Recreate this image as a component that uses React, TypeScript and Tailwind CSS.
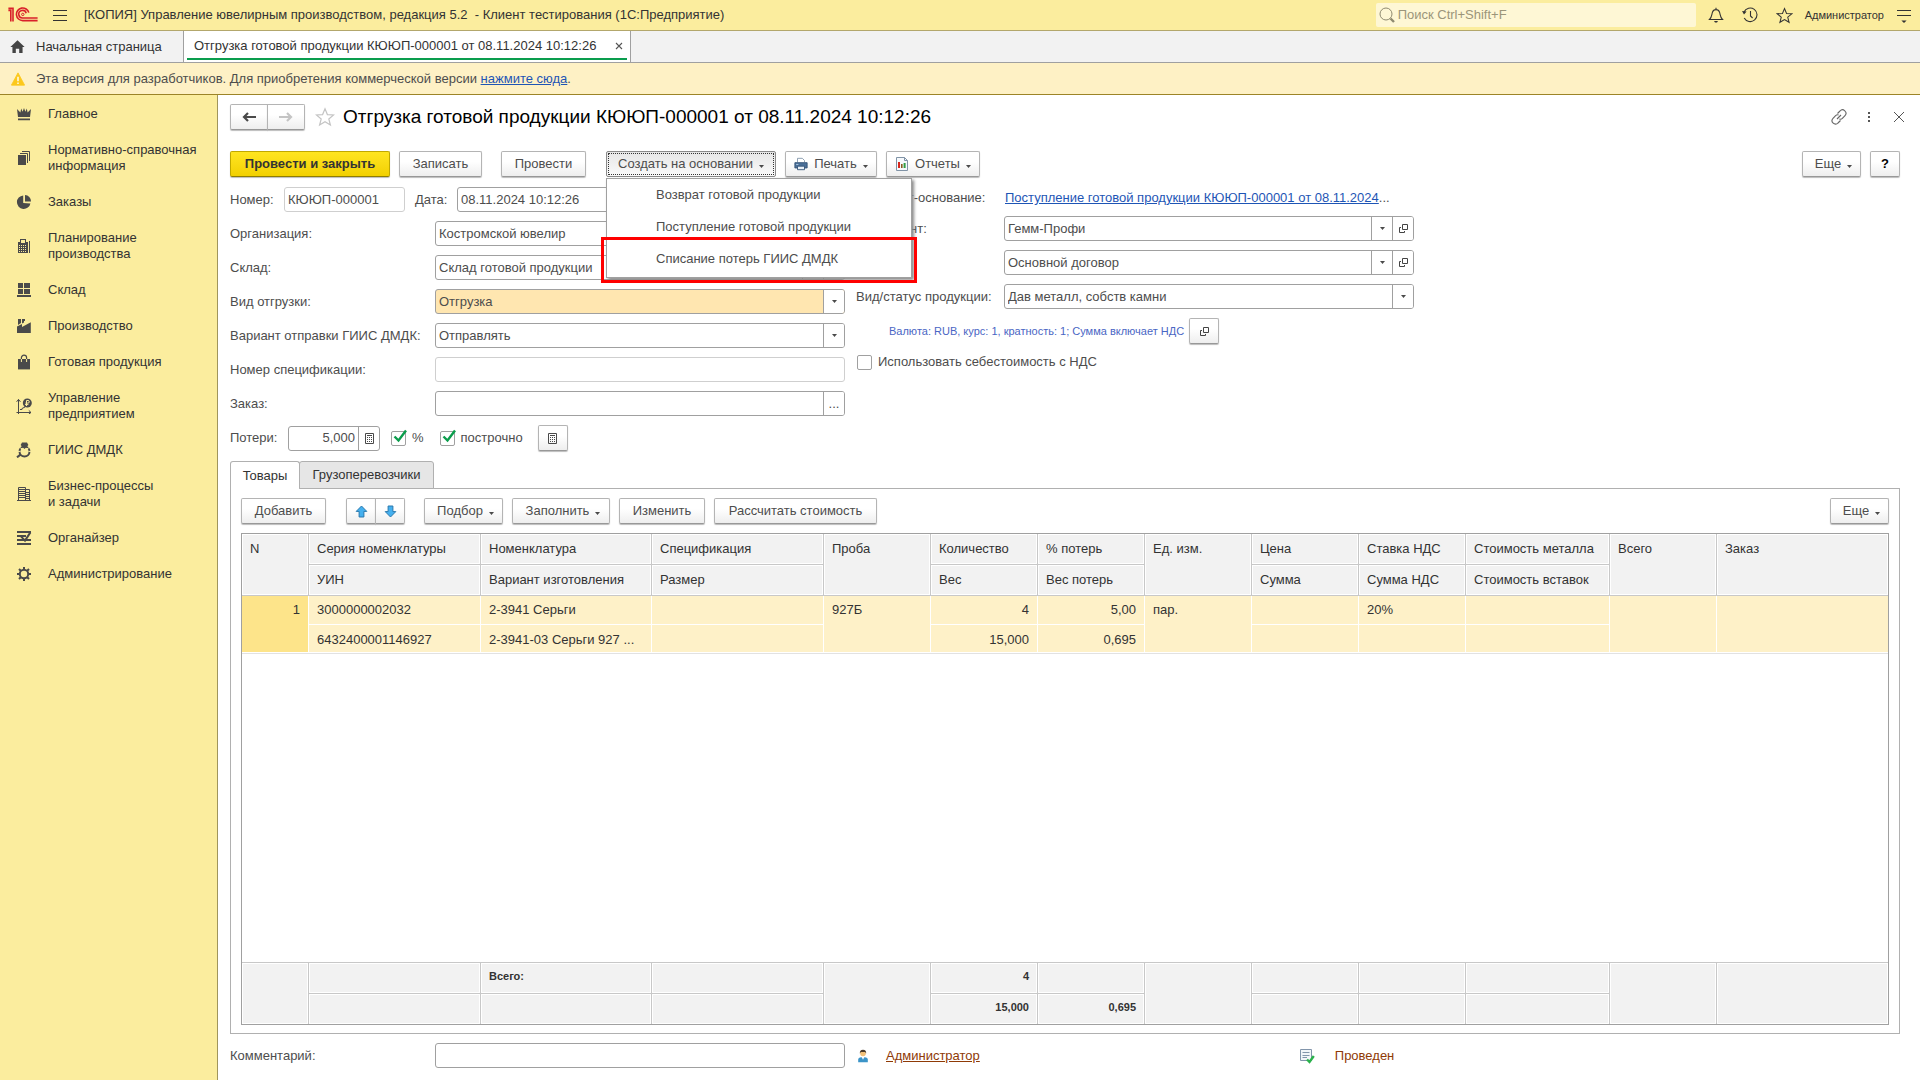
import { useId, type ReactNode } from "react";

/* ---------- icons ---------- */

function Svg({ children, size = 16, box = 16, className = "" }: { children: ReactNode; size?: number; box?: number; className?: string }) {
  return (
    <svg width={size} height={size} viewBox={`0 0 ${box} ${box}`} fill="none" className={`shrink-0 ${className}`} aria-hidden="true">
      {children}
    </svg>
  );
}

const Logo = () => (
  <svg width="30" height="16" viewBox="0 0 30 16" fill="none" stroke="#d9202a" strokeWidth="1.6" className="shrink-0" aria-label="1С">
    <path d="M.4 3.4H2.8V14.6M.4 1.4H5V14.6" />
    <path d="M20.8 5.6A6.3 6.3 0 1 0 14.8 13.6H29.6" />
    <path d="M18.2 6.2A3.8 3.8 0 1 0 14.8 11H29.6" />
    <path d="M13.6 7.4a1.2 1.2 0 1 0 2.4 0a1.2 1.2 0 1 0-2.4 0" strokeWidth="1" />
  </svg>
);

const I = "#4a4a4a";
const PAPER = "#fbed9e";

const sideIcons: Record<string, ReactNode> = {
  crown: <path fill={I} d="M1 3 4.4 6.6 5.2 2.4 6.6 5.8 8 2 9.4 5.8 10.8 2.4 11.6 6.6 15 3 14 11H2ZM2 12.4H14V14.2H2Z" />,
  docs: (
    <>
      <path fill={I} d="M2 5H10V15H2Z" />
      <path stroke={I} d="M4 3.5H11.5V13M6 1.5H13.5V11" />
    </>
  ),
  pie: (
    <>
      <path fill={I} d="M7.2 1.4A6.8 6.8 0 1 0 14.4 9.4L7.2 9Z" />
      <path fill={I} d="M9 1A6.2 6.2 0 0 1 15 7.4H9Z" />
    </>
  ),
  calc: (
    <>
      <path
        fill={I}
        fillRule="evenodd"
        d="M4 1H10V4H12V15H2V4H4ZM5 2V5H9V2ZM3 7V8H4V7ZM5 7V8H6V7ZM7 7V8H8V7ZM9 7V8H10V7ZM3 9V10H4V9ZM5 9V10H6V9ZM7 9V10H8V9ZM9 9V10H10V9ZM3 11V12H4V11ZM5 11V12H6V11ZM7 11V12H8V11ZM9 11V12H10V11ZM3 13V14H4V13ZM5 13V14H6V13ZM7 13V14H8V13ZM9 13V14H10V13Z"
      />
      <path fill={I} d="M13 3H14V15H13Z" />
    </>
  ),
  store: <path fill={I} d="M2 1H7V6H2ZM8 1H14V6H8ZM2 7H7V12H2ZM8 7H14V12H8ZM1 13H15V15H1Z" />,
  factory: (
    <>
      <path fill={I} d="M1 15V8.6L6 6V9L14.8 4.2V15Z" />
      <path fill={I} d="M2 1H5V5L2 7ZM6 1H9V3H8V4.4L6 5.4Z" />
    </>
  ),
  bag: (
    <>
      <path fill={I} d="M2 5H14V15.4H2Z" />
      <path stroke={I} strokeWidth="1.2" d="M5.4 6V3.8a2.6 2.6 0 0 1 5.2 0V6" />
      <path stroke={PAPER} strokeWidth="1" d="M5.4 8V5M10.6 8V5" />
    </>
  ),
  chart: (
    <>
      <path stroke={I} d="M2.5 1.5V16M.5 14.5H15M.6 3.8 2.5 1.4 4.4 3.8M12.8 12.4 15 14.5 12.8 16M4 11.5H6V10.5L9 9" />
      <circle cx="11.3" cy="5" r="4.5" fill={I} />
      <path stroke={PAPER} strokeWidth="1" d="M10.5 8V2.5H12a1.3 1.3 0 0 1 0 2.6H9.4M9 6.6H12.4" />
    </>
  ),
  ring: (
    <>
      <circle cx="8.5" cy="9.4" r="5" stroke={I} strokeWidth="2" />
      <path stroke={PAPER} strokeWidth="1" d="M3.4 5.2 8.5 8.4 13.6 5.2" />
      <path fill={I} d="M6 .6H11L12.4 3 8.5 7 4.6 3Z" />
      <path stroke={I} strokeWidth="2" d="M4.8 12.4 1 15.4" />
      <path stroke={PAPER} strokeWidth="1" d="M1.6 9.4H4.6M12.4 9.4H15.4" />
    </>
  ),
  building: (
    <>
      <path stroke={I} d="M2.5 15V1.5H9.5V15M9.5 3.5H13.5V15M1 14.5H15" />
      <path stroke={I} d="M3 3.5H9M3 5.5H9M3 7.5H9M3 9.5H9M3 11.5H9M10 6.5H13M10 8.5H13M10 10.5H13M10 12.5H13" />
    </>
  ),
  organizer: (
    <>
      <path stroke={I} strokeWidth="2" d="M1 2H15M1 6H10M1 10H15M1 14H15" />
      <path stroke={I} strokeWidth="2" d="M5 6.4 9 10.6 14.4 2.4" />
    </>
  ),
  gear: (
    <>
      <circle cx="8" cy="8" r="4.2" stroke={I} strokeWidth="2" />
      <path stroke={I} strokeWidth="2" d="M8 1V4M8 12V15M1 8H4M12 8H15M3 3 5 5M11 11 13 13M13 3 11 5M5 11 3 13" />
    </>
  ),
};

const Caret = ({ className = "" }: { className?: string }) => (
  <svg width="5" height="3" viewBox="0 0 5 3" className={`shrink-0 ${className}`} aria-hidden="true">
    <path d="M0 0H5L2.5 3Z" fill="#4a4a4a" />
  </svg>
);

const OpenIcon = () => (
  <Svg size={9} box={9}>
    <path stroke="#444" d="M3.5 .5H8.5V5.5H3.5ZM2 3.5H.5V8.5H5.5V7" />
  </Svg>
);

const CalcIcon = () => (
  <Svg size={11} box={11}>
    <path stroke="#4a4a4a" d="M1.5 .5H9.5V10.5H1.5Z" />
    <path stroke="#4a4a4a" d="M3 2.5H8" />
    <path stroke="#4a4a4a" strokeDasharray="1 1" d="M3 4.5H8M3 6.5H8M3 8.5H8" />
  </Svg>
);

const BlueArrow = ({ down = false }: { down?: boolean }) => (
  <Svg size={13} box={13} className={down ? "rotate-180" : ""}>
    <path d="M6.5 1 11.8 6.4H8.9V12H4.1V6.4H1.2Z" fill="#45b0ef" stroke="#2a79ad" />
  </Svg>
);

const Star = ({ size, color }: { size: number; color: string }) => (
  <Svg size={size} box={20}>
    <path d="M10 1.8 12.4 7.6 18.6 8 13.8 12 15.4 18 10 14.7 4.6 18 6.2 12 1.4 8 7.6 7.6Z" stroke={color} strokeWidth="1.2" />
  </Svg>
);

const NavArrow = ({ color, flip = false }: { color: string; flip?: boolean }) => (
  <Svg size={14} box={14} className={flip ? "rotate-180" : ""}>
    <path d="M14 7H2.5M6 3 2 7 6 11" stroke={color} strokeWidth="2.2" />
  </Svg>
);

/* ---------- controls ---------- */

const btn =
  "flex h-[26px] shrink-0 items-center justify-center whitespace-nowrap rounded-[2px] border border-[#b4b4b4] border-b-[#989898] bg-gradient-to-b from-white from-40% to-[#eeeeee] shadow-[0_1px_1px_#bcbcbc]";

function Btn({ children, className = "", label }: { children: ReactNode; className?: string; label?: string }) {
  return (
    <button type="button" aria-label={label} className={`${btn} ${className}`}>
      {children}
    </button>
  );
}

type FieldProps = { label: string; value: string; kind: "select" | "text" | "order"; open?: boolean; tinted?: boolean; readOnly?: boolean; labelClass: string };

function Field({ label, value, kind, open, tinted, readOnly, labelClass }: FieldProps) {
  const id = useId();
  const cell = "flex w-[21px] shrink-0 items-center justify-center border-l border-[#a0a0a0] bg-white";
  return (
    <div className="flex h-[25px] items-center">
      <label htmlFor={id} className={`shrink-0 ${labelClass}`}>
        {label}
      </label>
      <div className={`flex h-full w-[410px] shrink-0 overflow-hidden rounded-[3px] border ${readOnly ? "border-[#cfcfcf]" : "border-[#a0a0a0]"} ${tinted ? "bg-[#ffe6b0]" : "bg-white"}`}>
        {kind === "select" ? (
          <select id={id} className="min-w-0 flex-1 appearance-none bg-transparent px-[3px]">
            <option>{value}</option>
          </select>
        ) : (
          <input id={id} readOnly={readOnly} defaultValue={value} className="min-w-0 flex-1 bg-transparent px-[3px]" />
        )}
        {kind === "select" && (
          <button type="button" aria-label="Выбрать" className={cell}>
            <Caret />
          </button>
        )}
        {kind === "order" && (
          <button type="button" aria-label="Выбрать заказ" className={cell}>
            ...
          </button>
        )}
        {open && (
          <button type="button" aria-label="Открыть" className={cell}>
            <OpenIcon />
          </button>
        )}
      </div>
    </div>
  );
}

function Check({ label, checked }: { label: string; checked?: boolean }) {
  return (
    <label className="flex items-center gap-[6px]">
      <span className="relative h-[15px] w-[15px]">
        <input type="checkbox" defaultChecked={checked} className="peer block h-[15px] w-[15px] appearance-none rounded-[2px] border border-[#a0a0a0] bg-white" />
        <svg width="16" height="16" viewBox="0 0 16 16" fill="none" className="pointer-events-none absolute -top-0.5 left-0.5 hidden peer-checked:block" aria-hidden="true">
          <path d="M1.5 7.5 5.5 11.5 13 1.5" stroke="#0b9d4c" strokeWidth="2.4" />
        </svg>
      </span>
      {label}
    </label>
  );
}

/* ---------- data ---------- */

const sections: [string, string[]][] = [
  ["crown", ["Главное"]],
  ["docs", ["Нормативно-справочная", "информация"]],
  ["pie", ["Заказы"]],
  ["calc", ["Планирование", "производства"]],
  ["store", ["Склад"]],
  ["factory", ["Производство"]],
  ["bag", ["Готовая продукция"]],
  ["chart", ["Управление", "предприятием"]],
  ["ring", ["ГИИС ДМДК"]],
  ["building", ["Бизнес-процессы", "и задачи"]],
  ["organizer", ["Органайзер"]],
  ["gear", ["Администрирование"]],
];

type Column = { head: [string, string?]; data: [string, string?]; foot?: [string, string?]; right?: boolean };

const columns: Column[] = [
  { head: ["N"], data: ["1"], right: true },
  { head: ["Серия номенклатуры", "УИН"], data: ["3000000002032", "6432400001146927"] },
  { head: ["Номенклатура", "Вариант изготовления"], data: ["2-3941 Серьги", "2-3941-03 Серьги 927 ..."], foot: ["Всего:", ""] },
  { head: ["Спецификация", "Размер"], data: ["", ""] },
  { head: ["Проба"], data: ["927Б"] },
  { head: ["Количество", "Вес"], data: ["4", "15,000"], foot: ["4", "15,000"], right: true },
  { head: ["% потерь", "Вес потерь"], data: ["5,00", "0,695"], foot: ["", "0,695"], right: true },
  { head: ["Ед. изм."], data: ["пар."] },
  { head: ["Цена", "Сумма"], data: ["", ""] },
  { head: ["Ставка НДС", "Сумма НДС"], data: ["20%", ""] },
  { head: ["Стоимость металла", "Стоимость вставок"], data: ["", ""] },
  { head: ["Всего"], data: [""] },
  { head: ["Заказ"], data: [""] },
];

const split = (c: Column) => c.head.length === 2;

function Goods() {
  const headCell = "border-b border-r border-[#c8c8c8] bg-[#f2f2f2] px-2 text-left font-normal shadow-[inset_0_0_0_1px_#fff]";
  const dataCell = "truncate border-b border-r border-white px-2";
  const footCell = "border-r border-t border-[#c8c8c8] bg-[#f2f2f2] px-2 pb-1 text-[11px] font-bold shadow-[inset_0_0_0_1px_#fff]";
  return (
    <table className="h-full w-full table-fixed border-separate border-spacing-0 border border-[#a0a0a0] text-[#333]">
      <colgroup>
        <col className="w-[67px]" />
        <col className="w-[172px]" />
        <col className="w-[171px]" />
        <col className="w-[172px]" />
        <col className="w-[107px]" />
        <col className="w-[107px]" />
        <col className="w-[107px]" />
        <col className="w-[107px]" />
        <col className="w-[107px]" />
        <col className="w-[107px]" />
        <col className="w-[144px]" />
        <col className="w-[107px]" />
        <col />
      </colgroup>
      <thead>
        <tr className="h-[31px]">
          {columns.map((c) => (
            <th key={c.head[0]} rowSpan={split(c) ? 1 : 2} className={`${headCell} last:border-r-0 ${split(c) ? "" : "pt-[7px] align-top"}`}>
              {c.head[0]}
            </th>
          ))}
        </tr>
        <tr className="h-[31px]">
          {columns.filter(split).map((c) => (
            <th key={c.head[1]} className={headCell}>
              {c.head[1]}
            </th>
          ))}
        </tr>
      </thead>
      <tbody>
        <tr className="h-[29px]">
          {columns.map((c, i) => (
            <td
              key={c.head[0]}
              rowSpan={split(c) ? 1 : 2}
              className={`${dataCell} last:border-r-0 ${split(c) ? "" : "pt-[6px] align-top"} ${c.right ? "text-right" : ""} ${i === 0 ? "bg-[#fde48a]" : "bg-[#fef1c8]"}`}
            >
              {c.data[0]}
            </td>
          ))}
        </tr>
        <tr className="h-7">
          {columns.filter(split).map((c) => (
            <td key={c.head[0]} className={`${dataCell} bg-[#fef1c8] pt-0.5 ${c.right ? "text-right" : ""}`}>
              {c.data[1]}
            </td>
          ))}
        </tr>
        <tr>
          <td colSpan={13} className="border-t border-[#e2e2e2] bg-white" />
        </tr>
      </tbody>
      <tfoot>
        <tr className="h-[31px]">
          {columns.map((c) => (
            <td key={c.head[0]} rowSpan={split(c) ? 1 : 2} className={`${footCell} last:border-r-0 ${c.right ? "text-right" : ""}`}>
              {c.foot?.[0]}
            </td>
          ))}
        </tr>
        <tr className="h-[31px]">
          {columns.filter(split).map((c) => (
            <td key={c.head[0]} className={`${footCell} ${c.right ? "text-right" : ""}`}>
              {c.foot?.[1]}
            </td>
          ))}
        </tr>
      </tfoot>
    </table>
  );
}

/* ---------- page parts ---------- */

function TopBar() {
  return (
    <header className="flex h-[31px] shrink-0 items-center border-b border-[#b3a76c] bg-[#fbed9e] px-2 text-[#333]">
      <Logo />
      <button type="button" aria-label="Меню" className="ml-[14px]">
        <Svg>
          <path d="M1 3.5H15M1 8.5H15M1 13.5H15" stroke="#333" />
        </Svg>
      </button>
      <div className="ml-4 flex-1 whitespace-pre">[КОПИЯ] Управление ювелирным производством, редакция 5.2  - Клиент тестирования (1С:Предприятие)</div>
      <label className="flex h-6 w-[320px] items-center gap-[3px] rounded-[2px] bg-[#fef7d5] pl-[3px]">
        <Svg>
          <circle cx="7" cy="7" r="6" stroke="#8f8a70" />
          <path d="M11.5 11.5 15 15" stroke="#8f8a70" strokeWidth="2.4" />
        </Svg>
        <input type="search" aria-label="Поиск" placeholder="Поиск Ctrl+Shift+F" className="flex-1 bg-transparent placeholder:text-[#9b957a]" />
      </label>
      <div className="ml-3 flex items-center gap-[18px]">
        <button type="button" aria-label="Уведомления">
          <Svg>
            <path d="M1.5 12.5C4 10 3.6 8 4.4 5.4 5 3.4 6.4 2.6 8 2.6S11 3.4 11.6 5.4C12.4 8 12 10 14.5 12.5ZM8 .8V2.6" stroke="#333" strokeWidth="1.1" />
            <path d="M6 14H10L9 15.6H7Z" fill="#333" />
          </Svg>
        </button>
        <button type="button" aria-label="История">
          <Svg>
            <path d="M2 5A6.8 6.8 0 1 1 2.2 11M8.5 4V9L10.6 11" stroke="#333" strokeWidth="1.1" />
            <path d="M0 4 2 7.4 4.6 4.6Z" fill="#333" />
          </Svg>
        </button>
        <button type="button" aria-label="Избранное">
          <Star size={17} color="#333" />
        </button>
      </div>
      <button type="button" className="ml-3 text-[11px]">
        Администратор
      </button>
      <button type="button" aria-label="Настройки" className="ml-3">
        <Svg>
          <path d="M1 3.5H15M1 8.5H15" stroke="#333" />
          <path d="M5.4 13.4H10.6L8 16Z" fill="#333" />
        </Svg>
      </button>
    </header>
  );
}

function Tabs() {
  return (
    <nav className="flex h-8 shrink-0 border-b border-[#a0a0a0] bg-[#f2f2f2] text-[#333]">
      <a href="#home" className="flex w-[184px] items-center gap-[11px] border-r border-[#a0a0a0] pl-[10px]">
        <Svg size={15}>
          <path d="M8 1.4 15.6 8.6H13.4V15H9.8V10.4H6.2V15H2.6V8.6H.4Z" fill="#444" />
        </Svg>
        Начальная страница
      </a>
      <div className="flex w-[447px] border-r border-[#a0a0a0] bg-white px-[3px] pb-[2px]">
        <div className="flex flex-1 items-center justify-between border-b-2 border-[#0a9d4e] pl-[7px] pr-1 pt-[3px]">
          <a href="#document">Отгрузка готовой продукции КЮЮП-000001 от 08.11.2024 10:12:26</a>
          <button type="button" aria-label="Закрыть вкладку">
            <Svg size={8} box={8}>
              <path d="M1 1 7 7M7 1 1 7" stroke="#555" strokeWidth="1.1" />
            </Svg>
          </button>
        </div>
      </div>
    </nav>
  );
}

function CommandBar() {
  return (
    <div className="flex h-[26px]">
      <button
        type="button"
        className="flex w-40 items-center justify-center rounded-[2px] border border-[#c0a800] border-b-[#8f7d00] bg-gradient-to-b from-[#ffe51f] to-[#f2d000] font-bold text-[#333] shadow-[0_1px_1px_#bcbcbc]"
      >
        Провести и закрыть
      </button>
      <Btn className="ml-[9px] w-[83px]">Записать</Btn>
      <Btn className="ml-[19px] w-[85px]">Провести</Btn>
      <div className="relative ml-5">
        <button type="button" className="flex h-[26px] w-[170px] rounded-[2px] border border-[#8a8a8a] bg-gradient-to-b from-[#e6e6e6] to-[#fafafa] p-px">
          <span className="flex flex-1 items-center justify-center gap-[6px] self-stretch whitespace-nowrap border border-dotted border-[#333]">
            Создать на основании
            <Caret className="mt-1" />
          </span>
        </button>
        <div role="menu" className="absolute left-0 top-[27px] z-10 w-[306px] border border-[#a0a0a0] bg-white pb-0.5 shadow-[2px_2px_3px_#888]">
          {["Возврат готовой продукции", "Поступление готовой продукции", "Списание потерь ГИИС ДМДК"].map((t) => (
            <button key={t} type="button" role="menuitem" className="flex h-8 w-full items-center pl-[49px]">
              {t}
            </button>
          ))}
          <div className="pointer-events-none absolute -bottom-[6px] -left-[6px] -right-[6px] top-[58px] border-[3px] border-[#ff0000]" />
        </div>
      </div>
      <Btn className="ml-[9px] w-[92px] gap-[6px]">
        <Svg size={14}>
          <path d="M4 6V1.5H9.5L12 4V6" fill="#fff" stroke="#7f93a8" />
          <path d="M1 6.5H15V12.5H1Z" fill="#4b7099" stroke="#2f4f73" />
          <path d="M4 10.5H12V14.5H4Z" fill="#e8f0f8" stroke="#2f4f73" />
          <path d="M2.5 8.5H5" stroke="#bcd4ec" />
        </Svg>
        Печать
        <Caret className="mt-1" />
      </Btn>
      <Btn className="ml-[9px] w-[94px] gap-[6px]">
        <Svg size={14} box={14}>
          <path d="M1.5 .5H9.5L12.5 3.5V13.5H1.5Z" fill="#f6f9fc" stroke="#8093a6" />
          <path d="M9.5 .5V3.5H12.5" stroke="#8093a6" />
          <path d="M3 5H5V11H3Z" fill="#d8261c" />
          <path d="M6 7H7.6V11H6Z" fill="#8a5a20" />
          <path d="M8.6 6H10.6V11H8.6Z" fill="#2f9e44" />
        </Svg>
        Отчеты
        <Caret className="mt-1" />
      </Btn>
      <Btn className="ml-auto w-[59px] gap-[6px] pl-1">
        Еще
        <Caret className="mt-1" />
      </Btn>
      <Btn className="ml-[9px] w-[30px] font-bold text-black">?</Btn>
    </div>
  );
}

export default function App() {
  return (
    <div className="flex h-screen flex-col bg-white font-['Liberation_Sans',Arial,sans-serif] text-[13px] leading-4 text-[#4d4d4d]">
      <TopBar />
      <Tabs />
      <div className="flex h-8 shrink-0 items-center border-b border-[#9c8427] bg-[#fef1c5] pl-[11px]">
        <Svg size={14} className="mr-[11px]">
          <path d="M8 1 15.5 15H.5Z" fill="#fcc81c" stroke="#fcc81c" strokeLinejoin="round" />
          <path d="M8 5.5V10.5M8 12V13.6" stroke="#fff" strokeWidth="1.6" />
        </Svg>
        <span>
          Эта версия для разработчиков. Для приобретения коммерческой версии{" "}
          <a href="#buy" className="text-[#1e55b5] underline">
            нажмите сюда
          </a>
          .
        </span>
      </div>
      <div className="flex min-h-0 flex-1">
        <aside className="w-[218px] shrink-0 border-r border-[#a0955c] bg-[#fbed9e] pt-px text-[#333]">
          {sections.map(([icon, lines]) => (
            <a key={icon} href={`#${icon}`} className="flex items-center gap-4 py-[10px] pl-4">
              <Svg>{sideIcons[icon]}</Svg>
              <span>
                {lines.map((l) => (
                  <span key={l} className="block whitespace-nowrap">
                    {l}
                  </span>
                ))}
              </span>
            </a>
          ))}
        </aside>

        <main className="flex min-w-0 flex-1 flex-col pb-3 pl-3 pr-5 pt-[9px]">
          <div className="flex h-[25px] items-center">
            <div className="flex">
              <Btn label="Назад" className="w-[38px] rounded-r-none">
                <NavArrow color="#4a4a4a" />
              </Btn>
              <Btn label="Вперед" className="-ml-px w-[38px] rounded-l-none">
                <NavArrow color="#c4c4c4" flip />
              </Btn>
            </div>
            <button type="button" aria-label="В избранное" className="ml-[10px]">
              <Star size={20} color="#c4c4c4" />
            </button>
            <h1 className="ml-2 flex-1 text-[19px] leading-6 text-black">Отгрузка готовой продукции КЮЮП-000001 от 08.11.2024 10:12:26</h1>
            <div className="-mr-[7px] flex items-center gap-[14px]">
              <button type="button" aria-label="Ссылка">
                <Svg>
                  <path d="M6.5 4.5 9 2A3 3 0 0 1 14 6.6L11.4 9.4A3 3 0 0 1 8.4 10M9.5 11.5 7 14A3 3 0 0 1 2 9.4L4.6 6.6A3 3 0 0 1 7.6 6M6 10 10 6" stroke="#666" strokeWidth="1.1" />
                </Svg>
              </button>
              <button type="button" aria-label="Действия">
                <Svg>
                  <path d="M7 3H9V5H7ZM7 7H9V9H7ZM7 11H9V13H7Z" fill="#555" />
                </Svg>
              </button>
              <button type="button" aria-label="Закрыть">
                <Svg>
                  <path d="M3 3 13 13M13 3 3 13" stroke="#555" />
                </Svg>
              </button>
            </div>
          </div>

          <div className="mt-[22px]">
            <CommandBar />
          </div>

          <div className="mt-[10px] flex gap-[11px]">
            <div className="flex shrink-0 flex-col gap-[9px]">
              <div className="flex h-[25px] items-center">
                <label htmlFor="number" className="w-[54px]">
                  Номер:
                </label>
                <input id="number" readOnly defaultValue="КЮЮП-000001" className="h-full w-[121px] rounded-[3px] border border-[#cfcfcf] px-[3px]" />
                <label htmlFor="date" className="ml-[10px] w-[42px]">
                  Дата:
                </label>
                <input id="date" defaultValue="08.11.2024 10:12:26" className="h-full w-[170px] rounded-[3px] border border-[#a0a0a0] px-[3px]" />
              </div>
              <Field label="Организация:" value="Костромской ювелир" kind="select" open labelClass="w-[205px]" />
              <Field label="Склад:" value="Склад готовой продукции" kind="select" open labelClass="w-[205px]" />
              <Field label="Вид отгрузки:" value="Отгрузка" kind="select" tinted labelClass="w-[205px]" />
              <Field label="Вариант отправки ГИИС ДМДК:" value="Отправлять" kind="select" labelClass="w-[205px]" />
              <Field label="Номер спецификации:" value="" kind="text" readOnly labelClass="w-[205px]" />
              <Field label="Заказ:" value="" kind="order" labelClass="w-[205px]" />
            </div>

            <div className="flex flex-col gap-[9px] pt-[3px]">
              <div className="flex h-[17px] items-start">
                <span className="w-[149px]">Документ-основание:</span>
                <span>
                  <a href="#source" className="text-[#1e55b5] underline">
                    Поступление готовой продукции КЮЮП-000001 от 08.11.2024
                  </a>
                  ...
                </span>
              </div>
              <Field label="Контрагент:" value="Гемм-Профи" kind="select" open labelClass="w-[148px]" />
              <Field label="Договор:" value="Основной договор" kind="select" open labelClass="w-[148px]" />
              <Field label="Вид/статус продукции:" value="Дав металл, собств камни" kind="select" labelClass="w-[148px]" />
              <div className="flex items-center pl-[33px]">
                <a href="#currency" className="w-[300px] whitespace-nowrap text-[11px] text-[#4a66c4]">
                  Валюта: RUB, курс: 1, кратность: 1; Сумма включает НДС
                </a>
                <Btn label="Открыть параметры валюты" className="w-[30px]">
                  <OpenIcon />
                </Btn>
              </div>
              <div className="pl-px pt-px">
                <Check label="Использовать себестоимость с НДС" />
              </div>
            </div>
          </div>

          <div className="mt-[9px] flex h-[26px] items-center">
            <label htmlFor="loss" className="w-[58px]">
              Потери:
            </label>
            <div className="flex h-[25px] w-[92px] overflow-hidden rounded-[3px] border border-[#a0a0a0]">
              <input id="loss" defaultValue="5,000" className="min-w-0 flex-1 px-[3px] text-right" />
              <button type="button" aria-label="Калькулятор" className="flex w-[21px] items-center justify-center border-l border-[#a0a0a0]">
                <CalcIcon />
              </button>
            </div>
            <div className="ml-[11px] flex gap-4">
              <Check label="%" checked />
              <Check label="построчно" checked />
            </div>
            <Btn label="Рассчитать потери" className="ml-[15px] w-[30px]">
              <CalcIcon />
            </Btn>
          </div>

          <div role="tablist" className="z-[1] mt-[10px] flex h-7 text-[#333]">
            <button type="button" role="tab" aria-selected="true" className="w-[70px] rounded-t-[3px] border border-b-0 border-[#b0b0b0] bg-white">
              Товары
            </button>
            <button type="button" role="tab" aria-selected="false" className="-ml-px w-[135px] rounded-t-[3px] border border-[#b0b0b0] bg-[#e6e6e6]">
              Грузоперевозчики
            </button>
          </div>
          <section className="-mt-px flex min-h-0 flex-1 flex-col gap-[9px] border border-[#b0b0b0] px-[10px] pb-2 pt-[9px]">
            <div className="flex">
              <Btn className="w-[85px]">Добавить</Btn>
              <Btn label="Вверх" className="ml-5 w-[30px] rounded-r-none">
                <BlueArrow />
              </Btn>
              <Btn label="Вниз" className="-ml-px w-[30px] rounded-l-none">
                <BlueArrow down />
              </Btn>
              <Btn className="ml-[19px] w-[79px] gap-[6px] pl-1">
                Подбор
                <Caret className="mt-1" />
              </Btn>
              <Btn className="ml-[9px] w-[98px] gap-[6px] pl-1">
                Заполнить
                <Caret className="mt-1" />
              </Btn>
              <Btn className="ml-[9px] w-[86px]">Изменить</Btn>
              <Btn className="ml-[9px] w-[163px]">Рассчитать стоимость</Btn>
              <Btn className="ml-auto w-[59px] gap-[6px] pl-1">
                Еще
                <Caret className="mt-1" />
              </Btn>
            </div>
            <div className="min-h-0 flex-1">
              <Goods />
            </div>
          </section>

          <footer className="mt-[9px] flex h-[25px] items-center">
            <label htmlFor="comment" className="w-[205px]">
              Комментарий:
            </label>
            <input id="comment" className="h-full w-[410px] rounded-[3px] border border-[#a0a0a0] px-[3px]" />
            <Svg size={14} className="ml-[11px]">
              <path d="M2.5 15V12.4Q2.5 9.6 6 9.4H10Q13.5 9.6 13.5 12.4V15Z" fill="#3b94c8" />
              <path d="M6.4 9.2H9.6L8 12.4Z" fill="#fff" />
              <circle cx="8" cy="5" r="3.2" fill="#f2c078" />
              <path d="M4.4 5Q4 1 8 .8 12 1 11.6 5L10.4 3.4H5.6Z" fill="#4a3a2a" />
            </Svg>
            <a href="#user" className="ml-4 text-[#8f3a06] underline">
              Администратор
            </a>
            <div className="ml-[319px] flex items-center gap-5 text-[#8f3a06]">
              <Svg>
                <path d="M1.5 1.5H12.5V12.5H1.5Z" fill="#f2f5f9" stroke="#8295ab" />
                <path d="M3.5 4.5H10.5M3.5 7.5H10.5M3.5 9.5H8" stroke="#8295ab" />
                <path d="M8 11.5 10.5 14 14.8 8" stroke="#2bb24c" strokeWidth="2.4" />
              </Svg>
              Проведен
            </div>
          </footer>
        </main>
      </div>
    </div>
  );
}
